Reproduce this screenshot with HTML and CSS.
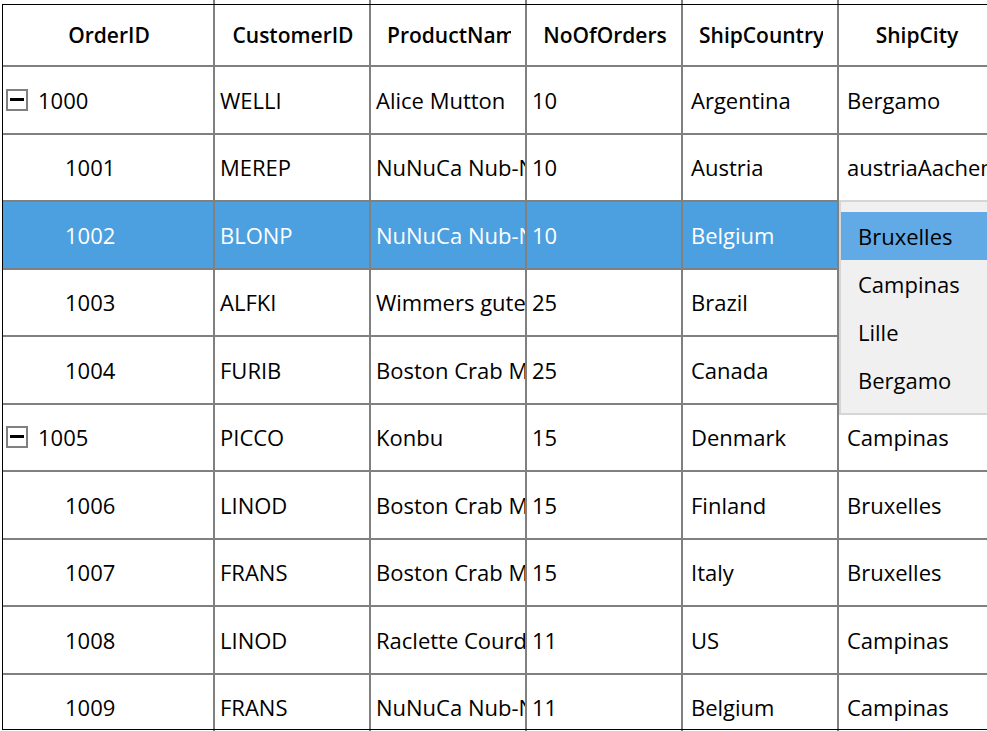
FILE: index.html
```html
<!DOCTYPE html>
<html lang="en">
<head>
  <meta charset="utf-8">
  <title>Orders</title>
  <link rel="stylesheet" href="styles.css">
</head>
<body>
  <div class="grid">
    <div class="row head">
      <div class="cell"><span>OrderID</span></div>
      <div class="cell"><span>CustomerID</span></div>
      <div class="cell"><span>ProductName</span></div>
      <div class="cell"><span>NoOfOrders</span></div>
      <div class="cell"><span>ShipCountry</span></div>
      <div class="cell"><span>ShipCity</span></div>
    </div>

    <div class="row">
      <div class="cell id group"><span class="expander"></span>1000</div>
      <div class="cell">WELLI</div>
      <div class="cell">Alice Mutton</div>
      <div class="cell">10</div>
      <div class="cell wide">Argentina</div>
      <div class="cell wide">Bergamo</div>
    </div>
    <div class="row">
      <div class="cell id">1001</div>
      <div class="cell">MEREP</div>
      <div class="cell">NuNuCa Nub-Nougat-Creme</div>
      <div class="cell">10</div>
      <div class="cell wide">Austria</div>
      <div class="cell wide">austriaAachen</div>
    </div>
    <div class="row selected">
      <div class="cell id">1002</div>
      <div class="cell">BLONP</div>
      <div class="cell">NuNuCa Nub-Nougat-Creme</div>
      <div class="cell">10</div>
      <div class="cell wide">Belgium</div>
      <div class="cell wide"></div>
    </div>
    <div class="row">
      <div class="cell id">1003</div>
      <div class="cell">ALFKI</div>
      <div class="cell">Wimmers gute Semmelknödel</div>
      <div class="cell">25</div>
      <div class="cell wide">Brazil</div>
      <div class="cell wide">Lille</div>
    </div>
    <div class="row">
      <div class="cell id">1004</div>
      <div class="cell">FURIB</div>
      <div class="cell">Boston Crab Meat</div>
      <div class="cell">25</div>
      <div class="cell wide">Canada</div>
      <div class="cell wide">Bergamo</div>
    </div>
    <div class="row">
      <div class="cell id group"><span class="expander"></span>1005</div>
      <div class="cell">PICCO</div>
      <div class="cell">Konbu</div>
      <div class="cell">15</div>
      <div class="cell wide">Denmark</div>
      <div class="cell wide">Campinas</div>
    </div>
    <div class="row">
      <div class="cell id">1006</div>
      <div class="cell">LINOD</div>
      <div class="cell">Boston Crab Meat</div>
      <div class="cell">15</div>
      <div class="cell wide">Finland</div>
      <div class="cell wide">Bruxelles</div>
    </div>
    <div class="row">
      <div class="cell id">1007</div>
      <div class="cell">FRANS</div>
      <div class="cell">Boston Crab Meat</div>
      <div class="cell">15</div>
      <div class="cell wide">Italy</div>
      <div class="cell wide">Bruxelles</div>
    </div>
    <div class="row">
      <div class="cell id">1008</div>
      <div class="cell">LINOD</div>
      <div class="cell">Raclette Courdavault</div>
      <div class="cell">11</div>
      <div class="cell wide">US</div>
      <div class="cell wide">Campinas</div>
    </div>
    <div class="row">
      <div class="cell id">1009</div>
      <div class="cell">FRANS</div>
      <div class="cell">NuNuCa Nub-Nougat-Creme</div>
      <div class="cell">11</div>
      <div class="cell wide">Belgium</div>
      <div class="cell wide">Campinas</div>
    </div>
  </div>

  <!-- outer window edge drawn over the grid -->
  <div class="frame"></div>

  <!-- ShipCity editor drop-down for the row being edited -->
  <ul class="dropdown">
    <li class="active">Bruxelles</li>
    <li>Campinas</li>
    <li>Lille</li>
    <li>Bergamo</li>
  </ul>
</body>
</html>
```

FILE: styles.css
```css
:root {
  --line: #808080;
  --select: #4ca0e0;
  --hover: #62aae6;
  --popup-bg: #f0f0f0;
  --popup-border: #d6d6d6;
}
html, body {
  margin: 0;
  height: 731px;
  overflow: hidden;
}
body {
  position: relative;
  background: #fff;
  color: #000;
  font-family: "Open Sans", sans-serif;
  font-size: 22px;
}
.grid {
  margin-left: 3px;
}
.row {
  display: grid;
  grid-template-columns: 212px 156px 156px 156px 156px 156px;
  height: 67.5px;
  box-sizing: border-box;
  border-bottom: 2px solid var(--line);
}
.cell {
  display: flex;
  align-items: center;
  padding-left: 5px;
  border-right: 2px solid var(--line);
  white-space: nowrap;
  overflow: hidden;
}
.cell.wide { padding-left: 8px; }
.cell.id { padding-left: 62px; }
.cell.id.group { padding-left: 3px; }

.head {
  height: 67px;
  font-weight: 600;
  font-size: 21px;
}
.head .cell {
  display: block;
  padding: 3px 14px 0 16px;
  line-height: 64px;
  text-align: center;
}
/* header captions are clipped inside the cell padding */
.head .cell span {
  display: block;
  overflow: hidden;
}

.selected {
  background: var(--select);
  color: #fff;
}

/* collapse box in front of a group row */
.expander {
  position: relative;
  width: 22px;
  height: 22px;
  margin-right: 10px;
  box-sizing: border-box;
  border: 2px solid var(--line);
  flex: none;
}
.expander::after {
  content: "";
  position: absolute;
  left: 2px;
  right: 2px;
  top: 7px;
  height: 3px;
  background: #000;
}

.frame {
  position: absolute;
  left: 2px;
  top: 4px;
  right: -10px;
  height: 724px;
  border: 1px solid #000;
  pointer-events: none;
}

.dropdown {
  position: absolute;
  left: 839px;
  top: 200px;
  width: 170px;
  margin: 0;
  padding: 10px 0 9px;
  list-style: none;
  background: var(--popup-bg);
  border: 2px solid var(--popup-border);
}
.dropdown li {
  height: 48px;
  line-height: 48px;
  padding-left: 17px;
}
.dropdown li.active {
  background: var(--hover);
}
```
